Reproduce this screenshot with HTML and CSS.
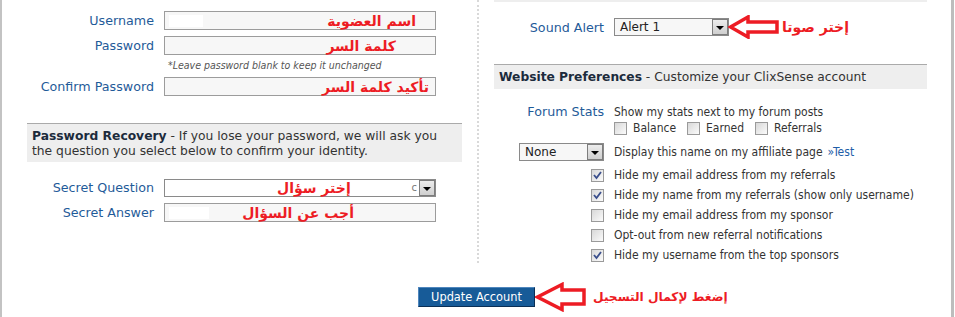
FILE: index.html
```html
<!DOCTYPE html>
<html lang="en">
<head>
  <meta charset="UTF-8">
  <title>Account Settings</title>
  <link rel="stylesheet" href="styles.css">
</head>
<body>
  <div class="page">
    <div class="columns">
      <div class="col col-left">
        <div class="row">
          <span class="label">Username</span>
          <div class="field"><span class="redact redact-user"></span><span class="ar ar-user" dir="rtl" lang="ar">اسم العضوية</span></div>
        </div>
        <div class="row">
          <span class="label">Password</span>
          <div class="field"><span class="ar ar-pass" dir="rtl" lang="ar">كلمة السر</span></div>
        </div>
        <div class="hint">*Leave password blank to keep it unchanged</div>
        <div class="row">
          <span class="label">Confirm Password</span>
          <div class="field"><span class="ar ar-confirm" dir="rtl" lang="ar">تأكيد كلمة السر</span></div>
        </div>

        <div class="box">
          <b>Password Recovery</b> - If you lose your password, we will ask you<br>the question you select below to confirm your identity.
        </div>

        <div class="recovery">
          <div class="row">
            <span class="label">Secret Question</span>
            <div class="field select">
              <span class="redact redact-question"></span>
              <span class="ar ar-question" dir="rtl" lang="ar">إختر سؤال</span>
              <span class="select-tail">c</span>
              <span class="drop"><i></i></span>
            </div>
          </div>
          <div class="row">
            <span class="label">Secret Answer</span>
            <div class="field"><span class="redact redact-answer"></span><span class="ar ar-answer" dir="rtl" lang="ar">أجب عن السؤال</span></div>
          </div>
        </div>
      </div>

      <div class="col col-right">
        <div class="section-end"></div>

        <div class="sound-row">
          <span class="label">Sound Alert</span>
          <div class="select select-sound"><span class="select-text">Alert 1</span><span class="drop"><i></i></span></div>
          <svg class="arrow" width="52" height="24" viewBox="0 0 52 24">
            <polygon points="2.5,12 20,2 20,7 49,7 49,17 20,17 20,22" fill="#fff" stroke="#ed1c24" stroke-width="3.5"/>
          </svg>
          <span class="ar ar-sound" dir="rtl" lang="ar">إختر صوتا</span>
        </div>

        <div class="prefs-head"><b>Website Preferences</b> - Customize your ClixSense account</div>

        <div class="pref-row">
          <span class="label">Forum Stats</span>
          <span>Show my stats next to my forum posts</span>
        </div>
        <div class="stats-row">
          <span class="opt opt-balance"><span class="cb"></span>Balance</span>
          <span class="opt opt-earned"><span class="cb"></span>Earned</span>
          <span class="opt"><span class="cb"></span>Referrals</span>
        </div>
        <div class="name-row">
          <div class="select select-name"><span class="select-text">None</span><span class="drop"><i></i></span></div>
          <span>Display this name on my affiliate page</span>
          <a class="link">&raquo;Test</a>
        </div>

        <ul class="checks">
          <li><span class="cb checked"><svg width="11" height="11" viewBox="0 0 11 11"><path d="M2 5 L4.5 8 L9 2" fill="none" stroke="#3b4f8c" stroke-width="1.8"/></svg></span>Hide my email address from my referrals</li>
          <li><span class="cb checked"><svg width="11" height="11" viewBox="0 0 11 11"><path d="M2 5 L4.5 8 L9 2" fill="none" stroke="#3b4f8c" stroke-width="1.8"/></svg></span>Hide my name from my referrals (show only username)</li>
          <li><span class="cb"></span>Hide my email address from my sponsor</li>
          <li><span class="cb"></span>Opt-out from new referral notifications</li>
          <li><span class="cb checked"><svg width="11" height="11" viewBox="0 0 11 11"><path d="M2 5 L4.5 8 L9 2" fill="none" stroke="#3b4f8c" stroke-width="1.8"/></svg></span>Hide my username from the top sponsors</li>
        </ul>
      </div>
    </div>

    <div class="actions">
      <div class="submit">
        <button class="btn">Update Account</button>
        <div class="callout">
          <svg class="arrow" width="52" height="30" viewBox="0 0 52 30">
            <polygon points="2.5,15 27,2.5 27,8 49,8 49,22 27,22 27,27.5" fill="#fff" stroke="#ed1c24" stroke-width="3.5"/>
          </svg>
          <span class="ar ar-submit" dir="rtl" lang="ar">إضغط لإكمال التسجيل</span>
        </div>
      </div>
    </div>
  </div>
</body>
</html>
```

FILE: styles.css
```css
body {
  margin: 0;
  font-family: "DejaVu Sans Condensed", "DejaVu Sans", Verdana, sans-serif;
  font-size: 12px;
  color: #333;
  background: #fff;
}
.page {
  width: 954px;
  height: 317px;
  box-sizing: border-box;
  border-left: 2px solid #c3c3c3;
  border-right: 3px solid #bdbdbd;
}
.columns {
  display: flex;
  height: 263px;
}
.col-left {
  width: 475px;
  padding-top: 11px;
  border-right: 2px dotted #d9d9d9;
}
.col-right {
  flex: 1;
}
.label {
  font-family: "DejaVu Sans", Verdana, sans-serif;
  font-size: 12.7px;
  color: #1f5b99;
  text-align: right;
  box-sizing: border-box;
  flex: none;
}
.row {
  display: flex;
  align-items: center;
  height: 19px;
}
.row + .row {
  margin-top: 6px;
}
.col-left .label {
  width: 162px;
  padding-right: 10px;
}
.field {
  width: 272px;
  height: 19px;
  box-sizing: border-box;
  border: 1px solid #9c9c9c;
  background: #f7f7f7;
  display: flex;
  align-items: center;
}
.redact {
  background: #fff;
  height: 12px;
  margin-left: 4px;
}
.redact-user { width: 34px; }
.redact-answer { width: 40px; }
.ar {
  font-family: "DejaVu Sans", sans-serif;
  font-weight: bold;
  font-size: 14px;
  color: #ed1c24;
  line-height: 1;
  white-space: nowrap;
}
.field .ar { margin-left: auto; }
.ar-user { margin-right: 19px; }
.ar-pass { margin-right: 39px; }
.ar-confirm { margin-right: 6px; }
.ar-answer { margin-right: 81px; }
.hint {
  margin: 2px 0 4px 166px;
  font-size: 10.5px;
  font-style: italic;
  color: #555;
  line-height: 16px;
}
.box {
  margin: 27px 15px 0 25px;
  padding: 5px 5px 3px;
  background: #eee;
  border-top: 1px solid #aaa;
  line-height: 15px;
  font-family: "DejaVu Sans", Verdana, sans-serif;
  font-size: 12.3px;
}
.box b,
.prefs-head b {
  color: #1c2b3c;
}
.recovery {
  margin-top: 16px;
}
.select {
  height: 18px;
  box-sizing: border-box;
  border: 1px solid #8a8a8a;
  background: #f7f7f7;
  display: flex;
  align-items: center;
}
.field.select {
  background: #fff;
}
.field.select .redact {
  width: 100px;
  margin-left: 4px;
}
.field .ar-question {
  margin-left: 8px;
}
.select-tail {
  margin-left: auto;
  color: #777;
  font-size: 11px;
}
.select-text {
  padding-left: 5px;
  color: #222;
  font-family: "DejaVu Sans", Verdana, sans-serif;
}
.drop {
  margin-left: auto;
  width: 16px;
  height: 16px;
  box-sizing: border-box;
  border: 1px solid #7d7d7d;
  background: linear-gradient(#ececec, #cfcfcf);
  display: flex;
  align-items: center;
  justify-content: center;
  flex: none;
}
.select-tail + .drop {
  margin-left: 2px;
}
.drop i {
  width: 0;
  height: 0;
  margin-top: 2px;
  border-left: 4px solid transparent;
  border-right: 4px solid transparent;
  border-top: 4px solid #000;
}
.section-end {
  margin: 0 24px 0 15px;
  height: 2px;
  background: #eee;
}
.sound-row {
  display: flex;
  align-items: center;
  margin-top: 16px;
  height: 18px;
}
.col-right .label {
  width: 135px;
  padding-right: 10px;
}
.select-sound {
  width: 115px;
}
.sound-row .arrow {
  flex: none;
  margin-left: -1px;
}
.ar-sound {
  margin-left: 2px;
}
.prefs-head {
  margin: 28px 24px 0 15px;
  padding-left: 5px;
  border-top: 1px solid #aaa;
  background: #eee;
  height: 24px;
  line-height: 24px;
  font-family: "DejaVu Sans", Verdana, sans-serif;
  font-size: 12.25px;
}
.pref-row {
  display: flex;
  margin-top: 15px;
  line-height: 16px;
}
.stats-row {
  display: flex;
  align-items: center;
  padding-left: 135px;
  height: 16px;
}
.opt {
  display: flex;
  align-items: center;
}
.opt-balance { width: 73px; }
.opt-earned { width: 68px; }
.cb {
  width: 13px;
  height: 13px;
  box-sizing: border-box;
  border: 1px solid #9a9a9a;
  background: linear-gradient(135deg, #d8d8d8, #fbfbfb);
  margin-right: 6px;
  display: flex;
  align-items: center;
  justify-content: center;
  flex: none;
}
.name-row {
  display: flex;
  align-items: center;
  margin-top: 7px;
  padding-left: 40px;
  height: 18px;
}
.select-name {
  width: 85px;
  margin-right: 10px;
}
.link {
  color: #1f5ea8;
  margin-left: 5px;
}
.checks {
  list-style: none;
  margin: 4px 0 0;
  padding: 0 0 0 112px;
}
.checks li {
  display: flex;
  align-items: center;
  height: 20px;
}
.checks .cb {
  margin-right: 10px;
}
.actions {
  display: flex;
  justify-content: center;
  margin-top: 24px;
}
.submit {
  position: relative;
}
.btn {
  width: 117px;
  height: 20px;
  padding: 0;
  font-family: "DejaVu Sans", Verdana, sans-serif;
  font-size: 11.4px;
  color: #fff;
  background: #175b98;
  border: 1px solid;
  border-color: #4f86bd #0b2f55 #0b2f55 #4f86bd;
}
.callout {
  position: absolute;
  left: 100%;
  top: -5px;
  display: flex;
  align-items: center;
  height: 30px;
}
.ar-submit {
  margin-left: 6px;
  font-size: 12.2px;
}
```
